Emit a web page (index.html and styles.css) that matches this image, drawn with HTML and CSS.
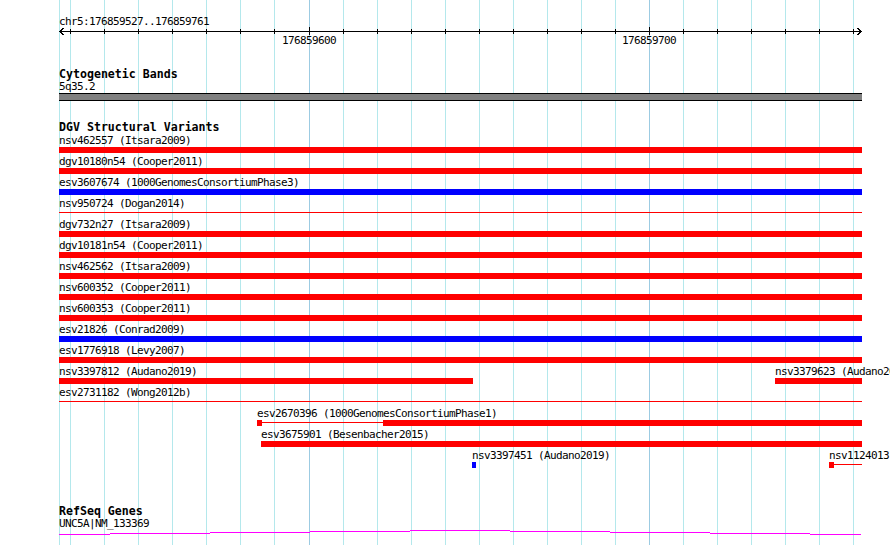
FILE: index.html
```html
<!DOCTYPE html>
<html lang="en">
<head>
  <meta charset="UTF-8">
  <title>chr5:176859527..176859761</title>
  <link rel="stylesheet" href="styles.css">
</head>
<body>
<div class="view">
  <!-- grid lines every 10 bp, drawn behind all tracks -->
  <svg class="grid" width="890" height="545" viewBox="0 0 890 545">
    <path class="minor" d="M59.5 0V545M70.5 0V545M104.5 0V545M138.5 0V545M172.5 0V545M206.5 0V545M240.5 0V545M274.5 0V545M343.5 0V545M377.5 0V545M411.5 0V545M445.5 0V545M479.5 0V545M513.5 0V545M547.5 0V545M581.5 0V545M615.5 0V545M683.5 0V545M717.5 0V545M751.5 0V545M785.5 0V545M819.5 0V545M853.5 0V545"/>
    <path class="major" d="M309.5 0V545M649.5 0V545"/>
  </svg>

  <div class="panel">
    <svg class="ruler" width="890" height="50" viewBox="0 0 890 50">
      <text x="59" y="25">chr5:176859527..176859761</text>
      <path class="axis" d="M59 31.5H862M63.5 28L60 31.5L63.5 35M857.5 28L861 31.5L857.5 35"/>
      <path class="axis" d="M70.5 29V34M104.5 29V34M138.5 29V34M172.5 29V34M206.5 29V34M240.5 29V34M274.5 29V34M343.5 29V34M377.5 29V34M411.5 29V34M445.5 29V34M479.5 29V34M513.5 29V34M547.5 29V34M581.5 29V34M615.5 29V34M683.5 29V34M717.5 29V34M751.5 29V34M785.5 29V34M819.5 29V34M853.5 29V34"/>
      <path class="axis" d="M309.5 27V35M649.5 27V35"/>
      <text x="309" y="44" text-anchor="middle">176859600</text>
      <text x="649" y="44" text-anchor="middle">176859700</text>
    </svg>

    <section class="track cyto">
      <div class="track-title">Cytogenetic Bands</div>
      <div class="track-label">5q35.2</div>
      <div class="band"></div>
    </section>

    <section class="track dgv">
      <div class="track-title">DGV Structural Variants</div>

      <div class="row">
        <div class="feat" style="left:0;width:803px"><span class="name">nsv462557 (Itsara2009)</span><span class="bar red"><span class="seg grow"></span></span></div>
      </div>
      <div class="row">
        <div class="feat" style="left:0;width:803px"><span class="name">dgv10180n54 (Cooper2011)</span><span class="bar red"><span class="seg grow"></span></span></div>
      </div>
      <div class="row">
        <div class="feat" style="left:0;width:803px"><span class="name">esv3607674 (1000GenomesConsortiumPhase3)</span><span class="bar blue"><span class="seg grow"></span></span></div>
      </div>
      <div class="row">
        <div class="feat" style="left:0;width:803px"><span class="name">nsv950724 (Dogan2014)</span><span class="bar red"><span class="link grow"></span></span></div>
      </div>
      <div class="row">
        <div class="feat" style="left:0;width:803px"><span class="name">dgv732n27 (Itsara2009)</span><span class="bar red"><span class="seg grow"></span></span></div>
      </div>
      <div class="row">
        <div class="feat" style="left:0;width:803px"><span class="name">dgv10181n54 (Cooper2011)</span><span class="bar red"><span class="seg grow"></span></span></div>
      </div>
      <div class="row">
        <div class="feat" style="left:0;width:803px"><span class="name">nsv462562 (Itsara2009)</span><span class="bar red"><span class="seg grow"></span></span></div>
      </div>
      <div class="row">
        <div class="feat" style="left:0;width:803px"><span class="name">nsv600352 (Cooper2011)</span><span class="bar red"><span class="seg grow"></span></span></div>
      </div>
      <div class="row">
        <div class="feat" style="left:0;width:803px"><span class="name">nsv600353 (Cooper2011)</span><span class="bar red"><span class="seg grow"></span></span></div>
      </div>
      <div class="row">
        <div class="feat" style="left:0;width:803px"><span class="name">esv21826 (Conrad2009)</span><span class="bar blue"><span class="seg grow"></span></span></div>
      </div>
      <div class="row">
        <div class="feat" style="left:0;width:803px"><span class="name">esv1776918 (Levy2007)</span><span class="bar red"><span class="seg grow"></span></span></div>
      </div>
      <div class="row">
        <div class="feat" style="left:0;width:414px"><span class="name">nsv3397812 (Audano2019)</span><span class="bar red"><span class="seg grow"></span></span></div>
        <div class="feat" style="left:716px;width:87px"><span class="name">nsv3379623 (Audano2019)</span><span class="bar red"><span class="seg grow"></span></span></div>
      </div>
      <div class="row">
        <div class="feat" style="left:0;width:803px"><span class="name">esv2731182 (Wong2012b)</span><span class="bar red"><span class="link grow"></span></span></div>
      </div>
      <div class="row">
        <div class="feat" style="left:198px;width:605px"><span class="name">esv2670396 (1000GenomesConsortiumPhase1)</span><span class="bar red"><span class="seg" style="width:5px"></span><span class="link" style="width:121px"></span><span class="seg grow"></span></span></div>
      </div>
      <div class="row">
        <div class="feat" style="left:202px;width:601px"><span class="name">esv3675901 (Besenbacher2015)</span><span class="bar red"><span class="seg grow"></span></span></div>
      </div>
      <div class="row">
        <div class="feat" style="left:413px;width:4px"><span class="name">nsv3397451 (Audano2019)</span><span class="bar blue"><span class="seg grow"></span></span></div>
        <div class="feat" style="left:770px;width:33px"><span class="name">nsv1124013</span><span class="bar red"><span class="seg" style="width:5px"></span><span class="link grow"></span></span></div>
      </div>
    </section>

    <section class="track genes">
      <div class="track-title">RefSeq Genes</div>
      <div class="track-label">UNC5A|NM_133369</div>
      <svg class="gene" width="803" height="8" viewBox="0 0 803 8">
        <path d="M0 4.5H51M51 3.5H151M151 2.5H251M251 1.5H351M351 0.5H451M451 1.5H551M551 2.5H651M651 3.5H751M751 4.5H802"/>
      </svg>
    </section>
  </div>
</div>
</body>
</html>
```

FILE: styles.css
```css
/* genome browser panel: 3.4px per bp, tracks start at x=59 */
body {
  margin: 0;
  background: #fff;
}
.view {
  position: relative;
  width: 890px;
  height: 545px;
  overflow: hidden;
  background: #fff;
  color: #000;
  font-family: "DejaVu Sans Mono", "Liberation Mono", monospace;
  font-size: 11px;
  letter-spacing: -0.62px;
}
.grid {
  position: absolute;
  top: 0;
  left: 0;
}
.grid path {
  fill: none;
  stroke-width: 1;
  shape-rendering: crispEdges;
}
.grid .minor {
  stroke: #b4e8ec;
}
.grid .major {
  stroke: #9ccbe2;
}
.panel {
  position: relative;
}
.ruler {
  display: block;
}
.ruler text {
  font-family: "DejaVu Sans Mono", "Liberation Mono", monospace;
  font-size: 11px;
  letter-spacing: -0.62px;
  fill: #000;
}
.ruler .axis {
  fill: none;
  stroke: #000;
  stroke-width: 1;
  shape-rendering: crispEdges;
}
.track {
  margin-left: 59px;
  width: 803px;
}
.track-title {
  font-weight: bold;
  font-size: 11.6px;
  letter-spacing: 0;
  line-height: 12px;
  white-space: nowrap;
}
.track-label {
  line-height: 13px;
  white-space: nowrap;
}
.cyto {
  margin-top: 18px;
}
.band {
  height: 6px;
  background: #808080;
  border-top: 1px solid #000;
  border-bottom: 1px solid #000;
}
.dgv {
  margin-top: 20px;
}
.dgv .track-title {
  margin-bottom: -1px;
}
.row {
  position: relative;
  height: 21px;
}
.feat {
  position: absolute;
  top: 0;
  height: 21px;
}
.name {
  display: block;
  height: 15px;
  line-height: 17px;
  white-space: nowrap;
}
.bar {
  display: flex;
  align-items: flex-start;
  height: 6px;
}
.red {
  color: #f00;
}
.blue {
  color: #00f;
}
.seg {
  height: 6px;
  background: currentColor;
}
.link {
  height: 1px;
  margin-top: 2px;
  background: currentColor;
}
.grow {
  flex: 1;
}
.genes {
  margin-top: 37px;
}
.gene {
  display: block;
}
.gene path {
  fill: none;
  stroke: #f0f;
  stroke-width: 1;
  shape-rendering: crispEdges;
}
```
